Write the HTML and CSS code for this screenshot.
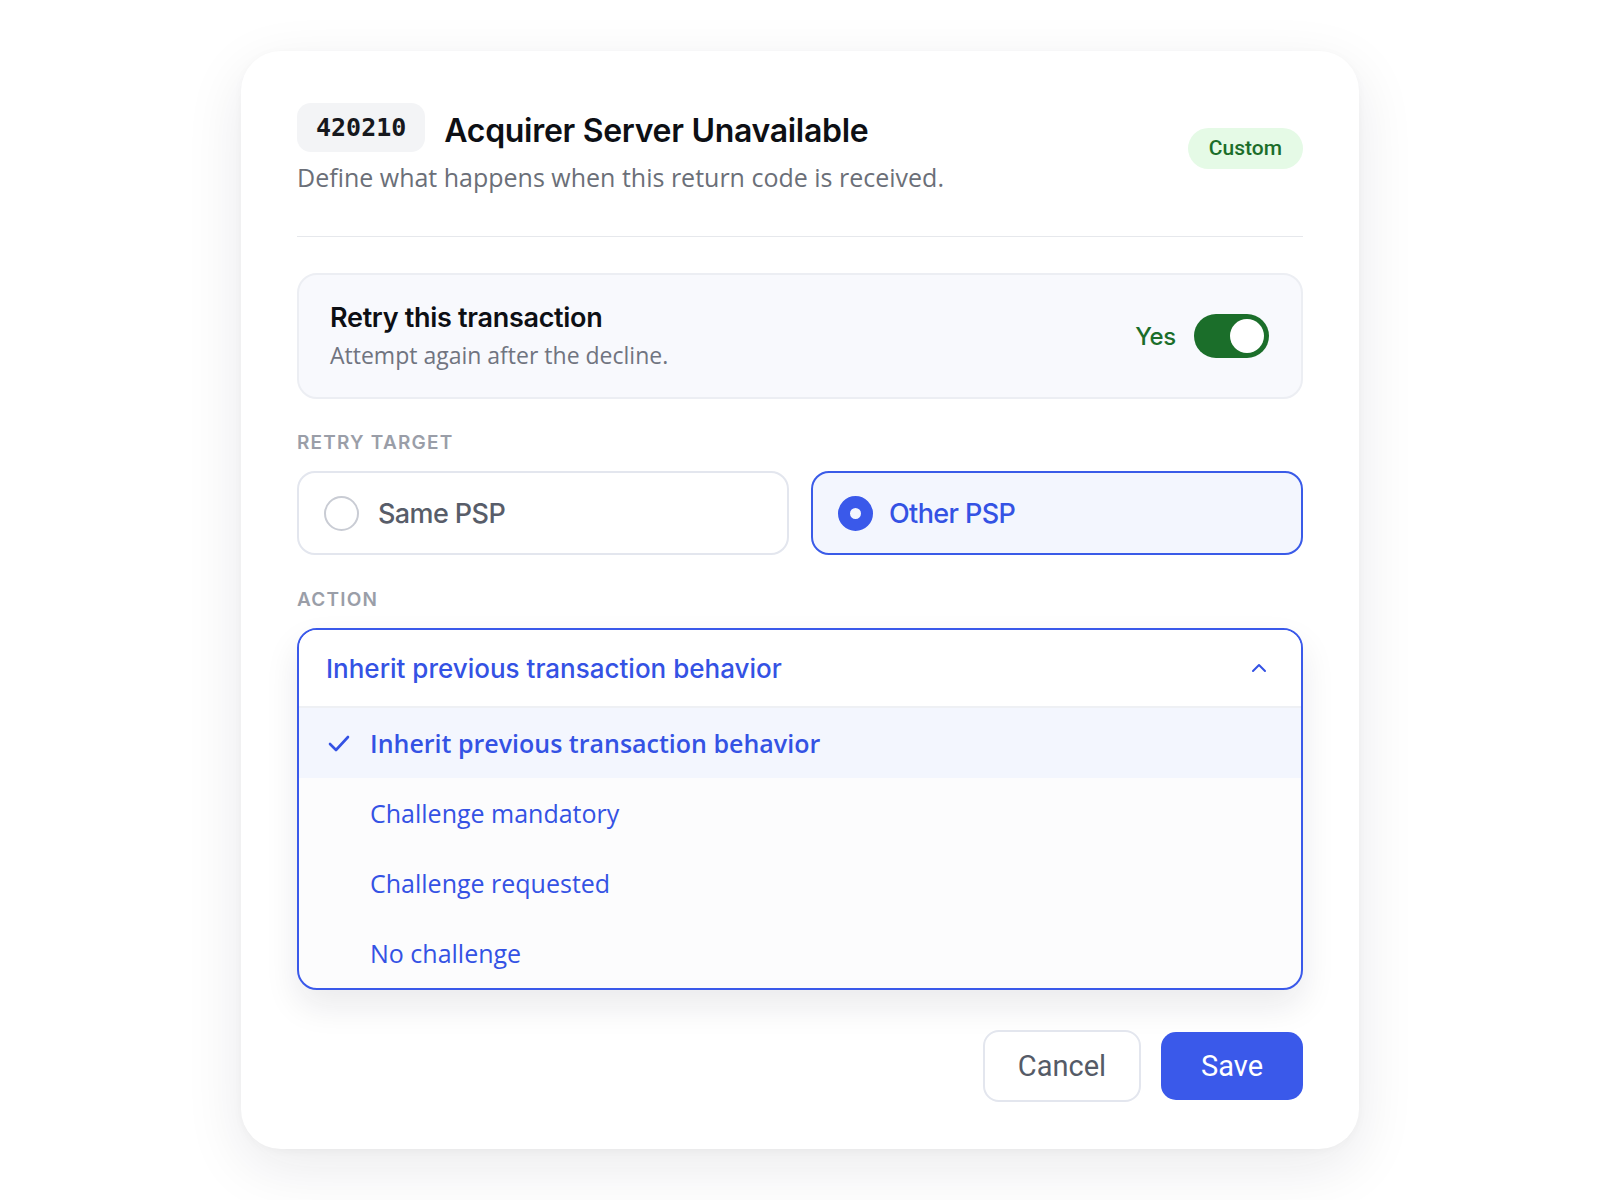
FILE: index.html
```html
<!DOCTYPE html>
<html lang="en">
<head>
    <meta charset="UTF-8">
    <meta name="viewport" content="width=device-width, initial-scale=1.0">
    <title>Return Code Rule</title>
    <link rel="stylesheet" href="styles.css">
</head>
<body>

    <div class="card">
        <!-- Header -->
        <div class="card-header">
            <div class="header-text">
                <div class="title-row">
                    <span class="code">420210</span>
                    <h1>Acquirer Server Unavailable</h1>
                </div>
                <p class="subtitle">Define what happens when this return code is received.</p>
            </div>
            <span class="pill">Custom</span>
        </div>

        <!-- Retry toggle -->
        <div class="retry-box">
            <div>
                <h3>Retry this transaction</h3>
                <p>Attempt again after the decline.</p>
            </div>
            <div class="toggle-wrap">
                <span class="toggle-label">Yes</span>
                <span class="toggle"><span class="knob"></span></span>
            </div>
        </div>

        <!-- Retry target -->
        <div class="field-label">Retry Target</div>
        <div class="radio-grid">
            <div class="radio-card">
                <span class="radio"></span>
                <span>Same PSP</span>
            </div>
            <div class="radio-card selected">
                <span class="radio"></span>
                <span>Other PSP</span>
            </div>
        </div>

        <!-- Action dropdown -->
        <div class="field-label action-label">Action</div>
        <div class="dropdown">
            <div class="dropdown-head">
                <span>Inherit previous transaction behavior</span>
                <svg width="20" height="20" viewBox="0 0 20 20" fill="none" stroke="currentColor" stroke-width="2" stroke-linecap="round" stroke-linejoin="round">
                    <polyline points="4,13 10,7 16,13"></polyline>
                </svg>
            </div>
            <ul class="options">
                <li class="active">
                    <svg class="check" width="26" height="26" viewBox="0 0 26 26" fill="none" stroke="currentColor" stroke-width="2.6" stroke-linecap="round" stroke-linejoin="round">
                        <polyline points="4,14 10,20 22,7"></polyline>
                    </svg>
                    Inherit previous transaction behavior
                </li>
                <li>Challenge mandatory</li>
                <li>Challenge requested</li>
                <li>No challenge</li>
            </ul>
        </div>

        <!-- Actions -->
        <div class="buttons">
            <button type="button" class="btn-cancel">Cancel</button>
            <button type="button" class="btn-save">Save</button>
        </div>
    </div>

</body>
</html>
```

FILE: styles.css
```css
body {
    margin: 0;
    padding-bottom: 52px;
    background-color: #ffffff;
    font-family: "Open Sans", "Noto Sans", sans-serif;
}

.card {
    width: 1118px;
    box-sizing: border-box;
    margin: 51px auto 0;
    padding: 52px 56px 47px;
    background-color: #ffffff;
    border-radius: 40px;
    box-shadow: 0 18px 60px rgba(20, 24, 40, 0.09), 0 2px 10px rgba(20, 24, 40, 0.03);
}

/* Header */
.card-header {
    display: flex;
    align-items: center;
    justify-content: space-between;
    padding-bottom: 42px;
    border-bottom: 1px solid #e6e8ec;
}

.title-row {
    display: flex;
    align-items: center;
    gap: 19px;
}

.code {
    display: inline-block;
    height: 49px;
    line-height: 49px;
    padding: 0 19px;
    background-color: #f3f4f6;
    border-radius: 14px;
    font-family: "DejaVu Sans Mono", monospace;
    font-size: 25px;
    font-weight: bold;
    color: #16181d;
}

h1 {
    margin: 5px 0 0;
    font-family: Inter, sans-serif;
    font-size: 32px;
    font-weight: 600;
    letter-spacing: -0.3px;
    color: #0d0f14;
}

.subtitle {
    margin: 8px 0 0;
    font-size: 25px;
    color: #6b6f78;
}

.pill {
    height: 41px;
    line-height: 41px;
    padding: 0 21px;
    border-radius: 21px;
    background-color: #e5fae6;
    color: #1b6e2a;
    font-family: Roboto, sans-serif;
    font-size: 21px;
    font-weight: 500;
}

/* Retry toggle */
.retry-box {
    display: flex;
    align-items: center;
    justify-content: space-between;
    margin-top: 36px;
    height: 126px;
    box-sizing: border-box;
    padding: 0 32px 0 31px;
    background-color: #f8f9fd;
    border: 2px solid #eceef3;
    border-radius: 20px;
}

.retry-box h3 {
    margin: 0;
    font-family: Inter, sans-serif;
    font-size: 27px;
    font-weight: 600;
    letter-spacing: -0.3px;
    color: #0d0f14;
}

.retry-box p {
    margin: 5px 0 0;
    font-size: 23px;
    color: #707480;
}

.toggle-wrap {
    display: flex;
    align-items: center;
    gap: 18px;
}

.toggle-label {
    font-family: Inter, sans-serif;
    font-size: 24px;
    font-weight: 500;
    letter-spacing: -0.3px;
    color: #1b6e2a;
}

.toggle {
    display: flex;
    align-items: center;
    justify-content: flex-end;
    width: 75px;
    height: 44px;
    box-sizing: border-box;
    padding: 0 5px;
    background-color: #1b6e2a;
    border-radius: 22px;
}

.knob {
    width: 34px;
    height: 34px;
    border-radius: 50%;
    background-color: #ffffff;
}

/* Labels */
.field-label {
    margin: 32px 0 16px;
    font-family: Inter, sans-serif;
    font-size: 19px;
    font-weight: 600;
    letter-spacing: 1.2px;
    text-transform: uppercase;
    color: #9a9ea8;
    line-height: 24px;
}

.action-label {
    margin-top: 33px;
}

/* Radio cards */
.radio-grid {
    display: grid;
    grid-template-columns: 1fr 1fr;
    gap: 22px;
}

.radio-card {
    display: flex;
    align-items: center;
    gap: 19px;
    height: 84px;
    box-sizing: border-box;
    padding: 0 25px;
    background-color: #ffffff;
    border: 2px solid #e3e6ee;
    border-radius: 18px;
    font-family: Inter, sans-serif;
    font-size: 27px;
    font-weight: 500;
    letter-spacing: -0.6px;
    color: #585d69;
}

.radio {
    width: 35px;
    height: 35px;
    box-sizing: border-box;
    border: 2px solid #c9ccd4;
    border-radius: 50%;
}

.radio-card.selected {
    gap: 16px;
    background-color: #f3f6fe;
    border-color: #3a5be8;
    color: #3452e4;
}

.radio-card.selected .radio {
    border: 12px solid #3a59ea;
}

/* Dropdown */
.dropdown {
    border: 2px solid #3a59ea;
    border-radius: 20px;
    overflow: hidden;
    background-color: #fcfcfd;
    box-shadow: 0 16px 34px rgba(20, 24, 40, 0.09);
}

.dropdown-head {
    display: flex;
    align-items: center;
    justify-content: space-between;
    height: 76px;
    padding: 0 32px 0 27px;
    background-color: #ffffff;
    border-bottom: 2px solid #eef0f4;
    font-family: Inter, sans-serif;
    font-size: 26px;
    font-weight: 500;
    letter-spacing: 0;
    color: #3452e4;
}

.options {
    list-style: none;
    margin: 0;
    padding: 0;
}

.options li {
    display: flex;
    align-items: center;
    height: 70px;
    padding-left: 71px;
    font-size: 25px;
    color: #3452e4;
}

.options li.active {
    padding-left: 27px;
    background-color: #f3f6fe;
    font-weight: 600;
}

.check {
    margin-right: 18px;
}

/* Buttons */
.buttons {
    display: flex;
    justify-content: flex-end;
    align-items: center;
    gap: 20px;
    margin-top: 40px;
}

.buttons button {
    font-family: Roboto, sans-serif;
    font-size: 29px;
    cursor: pointer;
}

.btn-cancel {
    width: 158px;
    height: 72px;
    background-color: #ffffff;
    border: 2px solid #e3e6ee;
    border-radius: 16px;
    color: #555b67;
}

.btn-save {
    width: 142px;
    height: 68px;
    background-color: #3a59ea;
    border: none;
    border-radius: 15px;
    color: #ffffff;
}
```
